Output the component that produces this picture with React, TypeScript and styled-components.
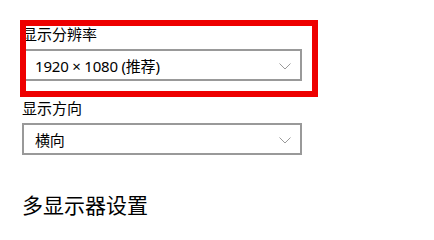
import styled, { createGlobalStyle } from 'styled-components'

const GlobalStyle = createGlobalStyle`
    html, body {
        margin: 0;
        padding: 0;
        background: #ffffff;
    }
    body {
        font-family: "Segoe UI", "Noto Sans", "Noto Sans CJK SC", sans-serif;
        color: #000000;
    }
`

const Page = styled.div`
    position: relative;
    width: 434px;
    height: 223px;
    overflow: hidden;
    box-sizing: border-box;
    padding: 24px 0 0 22px;
    display: flex;
    flex-direction: column;
`

const Field = styled.div<{ $top?: number }>`
    display: flex;
    flex-direction: column;
    gap: 5px;
    margin-top: ${({ $top }) => $top ?? 0}px;
`

const Label = styled.div`
    font-size: 15px;
    line-height: 20px;
    font-family: "Noto Sans CJK SC", sans-serif;
`

const Combo = styled.div`
    width: 280px;
    height: 32px;
    box-sizing: border-box;
    border: 2px solid #999999;
    padding: 2px 9px 0 11px;
    display: flex;
    align-items: center;
    justify-content: space-between;
    font-size: 15px;
    font-family: "Noto Sans", "Noto Sans CJK SC", sans-serif;
`

const Value = styled.span`
    line-height: 20px;
    letter-spacing: -0.2px;
`

const Chevron = () => (
    <svg width="12" height="7" viewBox="0 0 12 7" fill="none">
        <path d="M0.5 0.5 L6 6 L11.5 0.5" stroke="#9a9a9a" strokeWidth="1" />
    </svg>
)

const Heading = styled.h2`
    margin: 35px 0 0 0;
    font-size: 21px;
    line-height: 28px;
    font-weight: 400;
    font-family: "Noto Sans CJK SC", sans-serif;
`

// red annotation drawn over the resolution field
const Marker = styled.div`
    position: absolute;
    left: 20px;
    top: 20px;
    width: 298px;
    height: 77px;
    box-sizing: border-box;
    border: 6px solid #ee0000;
    pointer-events: none;
`

export default function App() {
    return (
        <Page>
            <GlobalStyle />
            <Field>
                <Label>显示分辨率</Label>
                <Combo>
                    <Value>1920 × 1080 (推荐)</Value>
                    <Chevron />
                </Combo>
            </Field>
            <Field $top={17}>
                <Label>显示方向</Label>
                <Combo>
                    <Value>横向</Value>
                    <Chevron />
                </Combo>
            </Field>
            <Heading>多显示器设置</Heading>
            <Marker />
        </Page>
    )
}
